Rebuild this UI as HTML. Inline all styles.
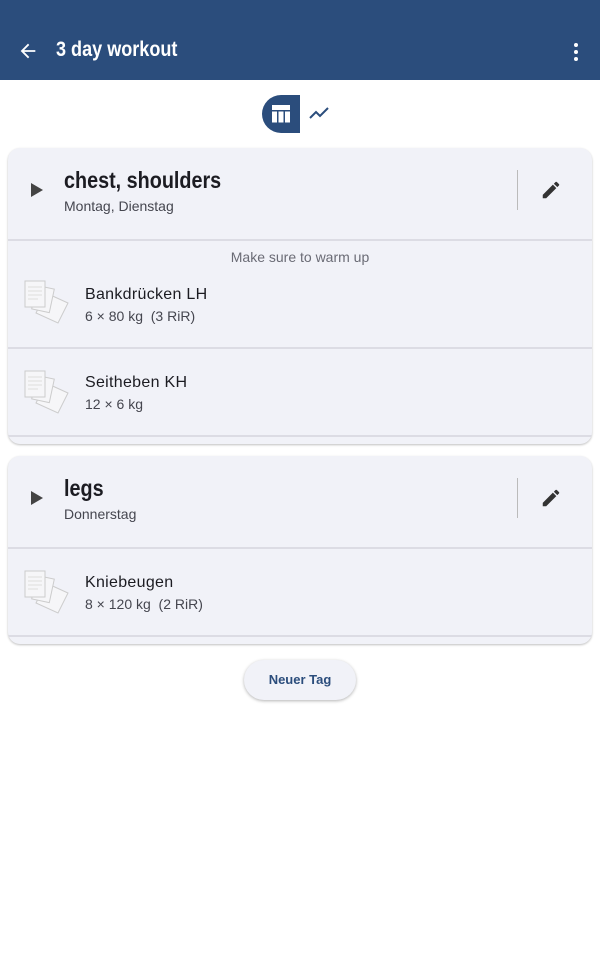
<!DOCTYPE html>
<html><head><style>
body{margin:0;width:600px;height:964px;background:#fff;font-family:"Liberation Sans",sans-serif;position:relative;overflow:hidden}
.bar{position:absolute;left:0;top:0;width:600px;height:80px;background:#2b4d7c}
.title{position:absolute;left:56px;top:38px;color:#fff;font-size:21px;font-weight:bold;transform:scaleX(.86);transform-origin:left}
.card{position:absolute;left:8px;width:584px;background:#f1f2f8;border-radius:12px;box-shadow:0 1px 2px rgba(0,0,0,.25);overflow:hidden}
.hd{position:relative;height:91px}
.name{position:absolute;left:56px;top:19px;font-size:23px;font-weight:bold;color:#1c1c22;transform:scaleX(.86);transform-origin:left}
.sub{position:absolute;left:56px;top:50px;font-size:14px;color:#45464f}
.vl{position:absolute;left:509px;top:22px;width:1px;height:40px;background:#bbb}
.div{height:2px;background:#dcdce4}
.item{position:relative;height:86px}
.in{position:absolute;left:77px;font-size:16px;color:#1c1c22;letter-spacing:.3px}
.is{position:absolute;left:77px;font-size:14px;color:#45464f}
.doc{position:absolute;left:16px}
</style></head><body>
<div class="bar"></div>
<svg style="position:absolute;left:17px;top:40px" width="22" height="22" viewBox="0 0 24 24"><path d="M20 11H7.8l5.6-5.6L12 4l-8 8 8 8 1.4-1.4L7.8 13H20z" fill="#fff"/></svg>
<div class="title">3 day workout</div>
<svg style="position:absolute;left:564px;top:40px" width="24" height="24" viewBox="0 0 24 24"><circle cx="12" cy="5" r="2" fill="#fff"/><circle cx="12" cy="12" r="2" fill="#fff"/><circle cx="12" cy="19" r="2" fill="#fff"/></svg>
<div style="position:absolute;left:262px;top:95px;width:38px;height:38px;background:#2b4d7c;border-radius:19px 0 0 19px"></div>
<svg style="position:absolute;left:271px;top:104px" width="20" height="20" viewBox="0 0 20 20"><rect x="1" y="1" width="18" height="5" fill="#fff"/><rect x="1" y="7.5" width="5" height="11" fill="#fff"/><rect x="7.5" y="7.5" width="5" height="11" fill="#fff"/><rect x="14" y="7.5" width="5" height="11" fill="#fff"/></svg>
<svg style="position:absolute;left:308px;top:104px" width="22" height="20" viewBox="0 0 22 20"><path d="M2 14l6-6 4 4 8-8" stroke="#2b4d7c" stroke-width="2" fill="none"/></svg>

<div class="card" style="top:148px;height:296px">
 <div class="hd">
  <svg style="position:absolute;left:22px;top:34px" width="14" height="16" viewBox="0 0 14 16"><path d="M1 1l12 7-12 7z" fill="#444"/></svg>
  <div class="name">chest, shoulders</div><div class="sub">Montag, Dienstag</div>
  <div class="vl"></div>
  <svg style="position:absolute;left:532px;top:31px" width="22" height="22" viewBox="0 0 24 24"><path d="M3 17.25V21h3.75L17.8 9.94l-3.75-3.75zM20.7 7.04a1 1 0 000-1.41l-2.34-2.34a1 1 0 00-1.41 0l-1.83 1.83 3.75 3.75z" fill="#333"/></svg>
 </div>
 <div class="div"></div>
 <div style="height:26px;text-align:center;font-size:14px;color:#6a6b75;line-height:32px">Make sure to warm up</div>
 <div class="item" style="height:80px">
  <svg class="doc" style="top:12px" width="46" height="46" viewBox="0 0 46 46"><g fill="#f6f6f8" stroke="#ccc" stroke-width="1"><path d="M22 14l22 10-10 20-22-10z"/><rect x="10" y="8" width="18" height="24" transform="rotate(12 19 20)"/><rect x="1" y="2" width="20" height="26"/></g><g stroke="#ddd"><path d="M4 8h14M4 12h14M4 16h14M4 20h10"/></g></svg>
  <div class="in" style="top:19px">Bankdrücken LH</div><div class="is" style="top:41px">6 × 80 kg&nbsp; (3 RiR)</div>
 </div>
 <div class="div"></div>
 <div class="item">
  <svg class="doc" style="top:20px" width="46" height="46" viewBox="0 0 46 46"><g fill="#f6f6f8" stroke="#ccc" stroke-width="1"><path d="M22 14l22 10-10 20-22-10z"/><rect x="10" y="8" width="18" height="24" transform="rotate(12 19 20)"/><rect x="1" y="2" width="20" height="26"/></g><g stroke="#ddd"><path d="M4 8h14M4 12h14M4 16h14M4 20h10"/></g></svg>
  <div class="in" style="top:25px">Seitheben KH</div><div class="is" style="top:47px">12 × 6 kg</div>
 </div>
 <div class="div"></div>
</div>

<div class="card" style="top:456px;height:188px">
 <div class="hd">
  <svg style="position:absolute;left:22px;top:34px" width="14" height="16" viewBox="0 0 14 16"><path d="M1 1l12 7-12 7z" fill="#444"/></svg>
  <div class="name">legs</div><div class="sub">Donnerstag</div>
  <div class="vl"></div>
  <svg style="position:absolute;left:532px;top:31px" width="22" height="22" viewBox="0 0 24 24"><path d="M3 17.25V21h3.75L17.8 9.94l-3.75-3.75zM20.7 7.04a1 1 0 000-1.41l-2.34-2.34a1 1 0 00-1.41 0l-1.83 1.83 3.75 3.75z" fill="#333"/></svg>
 </div>
 <div class="div"></div>
 <div class="item">
  <svg class="doc" style="top:20px" width="46" height="46" viewBox="0 0 46 46"><g fill="#f6f6f8" stroke="#ccc" stroke-width="1"><path d="M22 14l22 10-10 20-22-10z"/><rect x="10" y="8" width="18" height="24" transform="rotate(12 19 20)"/><rect x="1" y="2" width="20" height="26"/></g><g stroke="#ddd"><path d="M4 8h14M4 12h14M4 16h14M4 20h10"/></g></svg>
  <div class="in" style="top:25px">Kniebeugen</div><div class="is" style="top:47px">8 × 120 kg&nbsp; (2 RiR)</div>
 </div>
 <div class="div"></div>
</div>

<div style="position:absolute;left:244px;top:660px;width:112px;height:40px;border-radius:20px;background:#f1f2f8;box-shadow:0 1px 3px rgba(0,0,0,.3);text-align:center;line-height:40px;font-size:13px;font-weight:bold;color:#2b4d7c">Neuer Tag</div>
</body></html>
